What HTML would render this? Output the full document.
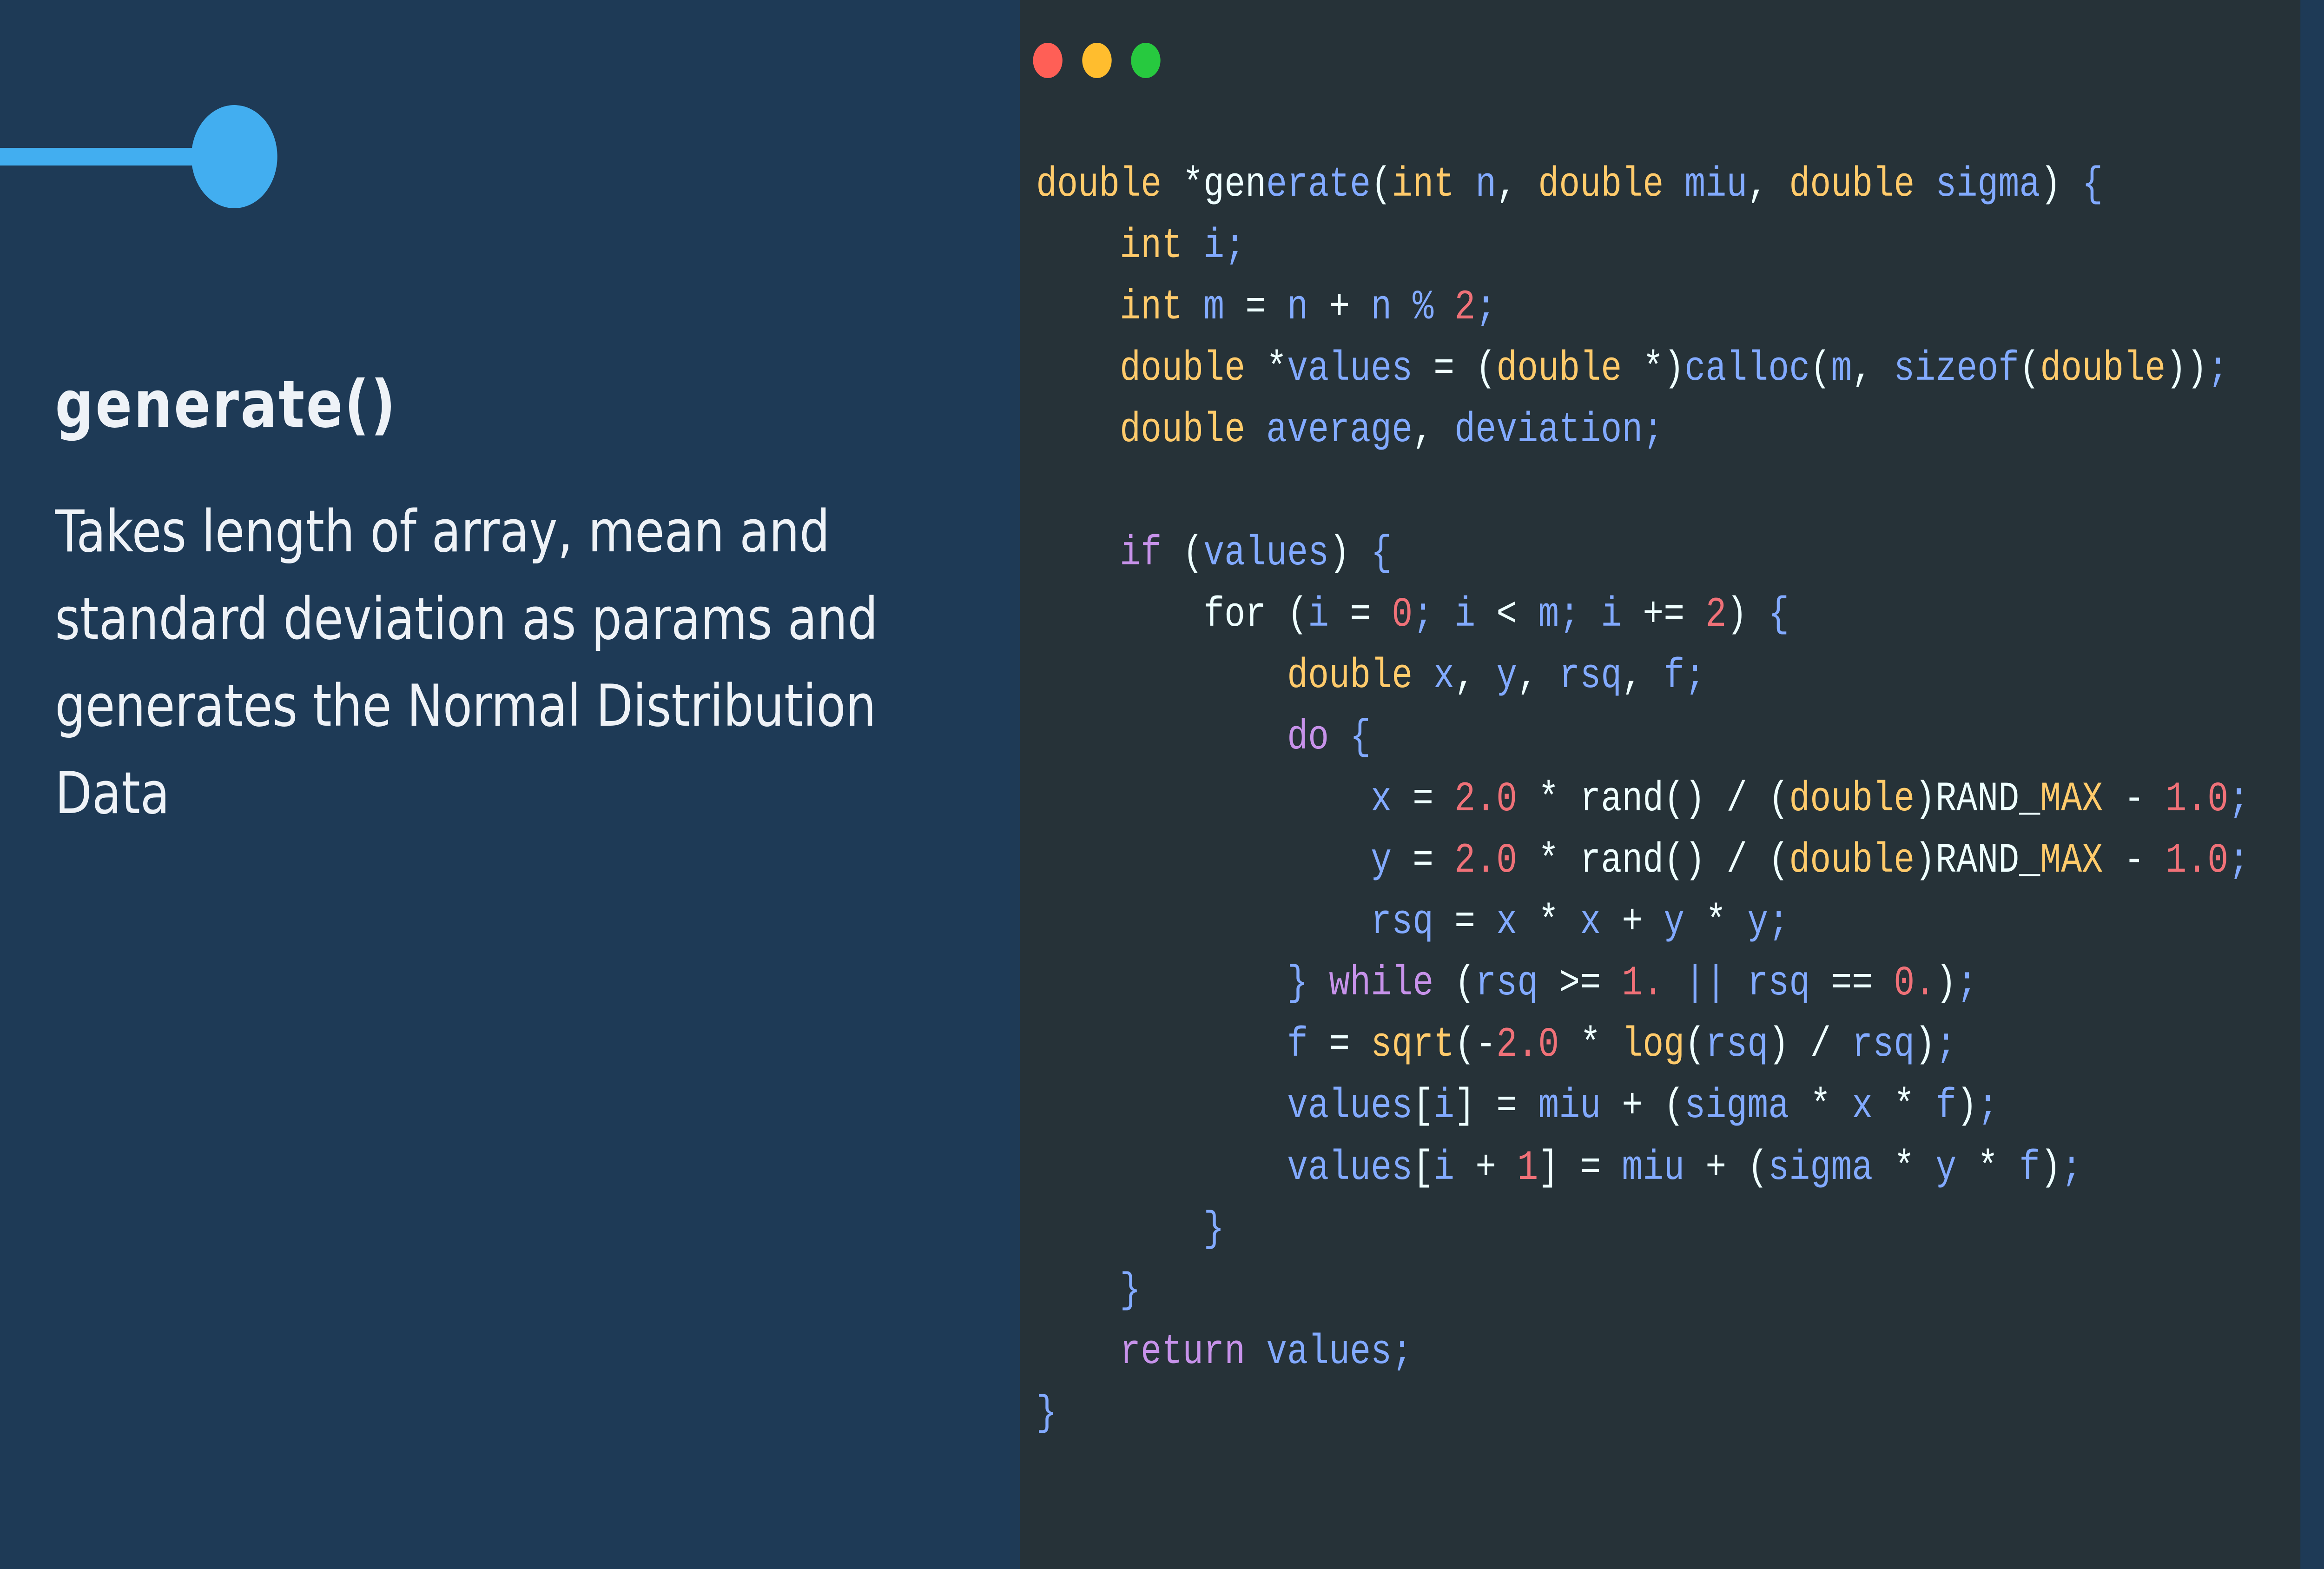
<!DOCTYPE html>
<html><head><meta charset="utf-8">
<style>
html,body{margin:0;padding:0;background:#1e3a56;overflow:hidden;width:100%;height:100%;}
svg{display:block;width:100vw;height:100vh;}
.t{font-family:"DejaVu Sans","Liberation Sans",sans-serif;fill:#eef2f7;}
.c{font-family:"Liberation Mono",monospace;font-size:90px;fill:#eeffff;}
.y{fill:#ffcb6b}.b{fill:#82aaff}.r{fill:#f07178}.p{fill:#c792ea}
</style></head><body>
<svg viewBox="0 0 6000 3375" preserveAspectRatio="none" xmlns="http://www.w3.org/2000/svg">
<rect x="0" y="0" width="6000" height="3375" fill="#1e3a56"/>
<rect x="0" y="318" width="536" height="38" fill="#42aef0"/>
<circle cx="605" cy="337" r="111" fill="#42aef0"/>
<text class="t" x="142" y="918" font-size="140" font-weight="bold" letter-spacing="4">generate()</text>
<text class="t" x="142" y="1186" font-size="124">Takes length of array, mean and</text>
<text class="t" x="142" y="1374" font-size="124">standard deviation as params and</text>
<text class="t" x="142" y="1561" font-size="124">generates the Normal Distribution</text>
<text class="t" x="142" y="1749" font-size="124">Data</text>
<rect x="2633" y="0" width="3306" height="3375" fill="#263238"/>
<circle cx="2705" cy="130" r="38" fill="#ff5f56"/>
<circle cx="2832" cy="130" r="38" fill="#ffbd2e"/>
<circle cx="2958" cy="130" r="38" fill="#27c93f"/>
<g class="c">
<text x="2675" y="421"><tspan class="y">double</tspan> *gen<tspan class="b">erate</tspan>(<tspan class="y">int</tspan> <tspan class="b">n</tspan>, <tspan class="y">double</tspan> <tspan class="b">miu</tspan>, <tspan class="y">double</tspan> <tspan class="b">sigma</tspan>) <tspan class="b">{</tspan></text>
<text x="2891" y="553"><tspan class="y">int</tspan> <tspan class="b">i;</tspan></text>
<text x="2891" y="685"><tspan class="y">int</tspan> <tspan class="b">m</tspan> = <tspan class="b">n</tspan> + <tspan class="b">n</tspan> <tspan class="b">%</tspan> <tspan class="r">2</tspan><tspan class="b">;</tspan></text>
<text x="2891" y="817"><tspan class="y">double</tspan> *<tspan class="b">values</tspan> = (<tspan class="y">double</tspan> *)<tspan class="b">calloc</tspan>(<tspan class="b">m</tspan>, <tspan class="b">sizeof</tspan>(<tspan class="y">double</tspan>))<tspan class="b">;</tspan></text>
<text x="2891" y="949"><tspan class="y">double</tspan> <tspan class="b">average</tspan>, <tspan class="b">deviation;</tspan></text>
<text x="2891" y="1214"><tspan class="p">if</tspan> (<tspan class="b">values</tspan>) <tspan class="b">{</tspan></text>
<text x="3107" y="1346">for (<tspan class="b">i</tspan> = <tspan class="r">0</tspan><tspan class="b">;</tspan> <tspan class="b">i</tspan> &lt; <tspan class="b">m;</tspan> <tspan class="b">i</tspan> += <tspan class="r">2</tspan>) <tspan class="b">{</tspan></text>
<text x="3323" y="1478"><tspan class="y">double</tspan> <tspan class="b">x</tspan>, <tspan class="b">y</tspan>, <tspan class="b">rsq</tspan>, <tspan class="b">f;</tspan></text>
<text x="3323" y="1610"><tspan class="p">do</tspan> <tspan class="b">{</tspan></text>
<text x="3539" y="1743"><tspan class="b">x</tspan> = <tspan class="r">2.0</tspan> * rand() / (<tspan class="y">double</tspan>)RAND_<tspan class="y">MAX</tspan> - <tspan class="r">1.0</tspan><tspan class="b">;</tspan></text>
<text x="3539" y="1875"><tspan class="b">y</tspan> = <tspan class="r">2.0</tspan> * rand() / (<tspan class="y">double</tspan>)RAND_<tspan class="y">MAX</tspan> - <tspan class="r">1.0</tspan><tspan class="b">;</tspan></text>
<text x="3539" y="2007"><tspan class="b">rsq</tspan> = <tspan class="b">x</tspan> * <tspan class="b">x</tspan> + <tspan class="b">y</tspan> * <tspan class="b">y;</tspan></text>
<text x="3323" y="2139"><tspan class="b">}</tspan> <tspan class="p">while</tspan> (<tspan class="b">rsq</tspan> &gt;= <tspan class="r">1.</tspan> <tspan class="b">||</tspan> <tspan class="b">rsq</tspan> == <tspan class="r">0.</tspan>)<tspan class="b">;</tspan></text>
<text x="3323" y="2271"><tspan class="b">f</tspan> = <tspan class="y">sqrt</tspan>(-<tspan class="r">2.0</tspan> * <tspan class="y">log</tspan>(<tspan class="b">rsq</tspan>) / <tspan class="b">rsq</tspan>)<tspan class="b">;</tspan></text>
<text x="3323" y="2403"><tspan class="b">values</tspan>[<tspan class="b">i</tspan>] = <tspan class="b">miu</tspan> + (<tspan class="b">sigma</tspan> * <tspan class="b">x</tspan> * <tspan class="b">f</tspan>)<tspan class="b">;</tspan></text>
<text x="3323" y="2536"><tspan class="b">values</tspan>[<tspan class="b">i</tspan> + <tspan class="r">1</tspan>] = <tspan class="b">miu</tspan> + (<tspan class="b">sigma</tspan> * <tspan class="b">y</tspan> * <tspan class="b">f</tspan>)<tspan class="b">;</tspan></text>
<text x="3107" y="2668"><tspan class="b">}</tspan></text>
<text x="2891" y="2800"><tspan class="b">}</tspan></text>
<text x="2891" y="2932"><tspan class="p">return</tspan> <tspan class="b">values;</tspan></text>
<text x="2675" y="3064"><tspan class="b">}</tspan></text>
</g>
</svg>
</body></html>
